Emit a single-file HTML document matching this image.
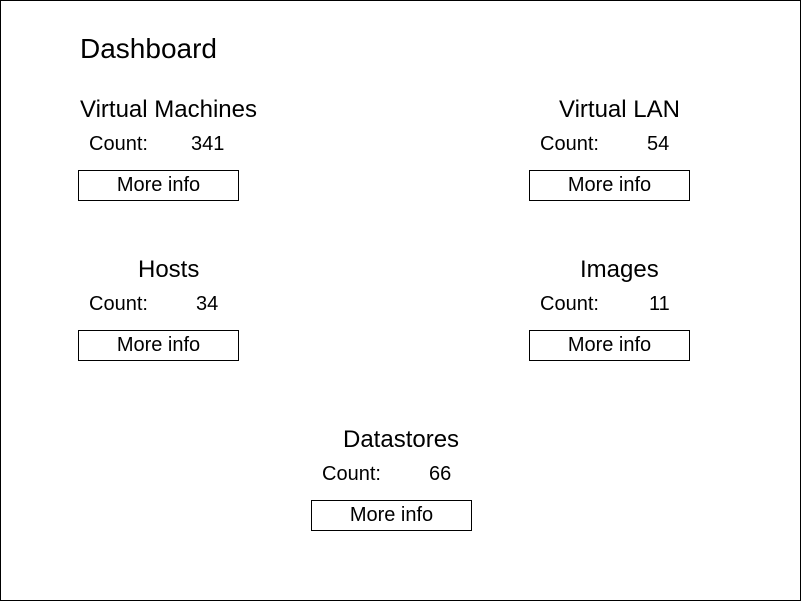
<!DOCTYPE html>
<html><head><style>
html,body{margin:0;padding:0}
body{width:801px;height:601px;position:relative;background:#fff;font-family:"Liberation Sans",Arial,sans-serif;color:#000;overflow:hidden}
.frame{position:absolute;left:0;top:0;width:799px;height:599px;border:1px solid #000}
.t{position:absolute;white-space:nowrap;line-height:1}
.h1{font-size:28px}
.h2{font-size:24px}
.c{font-size:20px}
.b{position:absolute;width:159px;height:29px;border:1px solid #000;font-size:20px;line-height:28px;text-align:center}
</style></head><body>
<div class="frame"></div>
<div class="t h1" style="left:80px;top:35px">Dashboard</div>

<div class="t h2" style="left:80px;top:98px">Virtual Machines</div>
<div class="t c" style="left:89px;top:134px">Count:</div>
<div class="t c" style="left:191px;top:134px">341</div>
<div class="b" style="left:78px;top:170px">More info</div>

<div class="t h2" style="left:559px;top:98px">Virtual LAN</div>
<div class="t c" style="left:540px;top:134px">Count:</div>
<div class="t c" style="left:647px;top:134px">54</div>
<div class="b" style="left:529px;top:170px">More info</div>

<div class="t h2" style="left:138px;top:258px">Hosts</div>
<div class="t c" style="left:89px;top:294px">Count:</div>
<div class="t c" style="left:196px;top:294px">34</div>
<div class="b" style="left:78px;top:330px">More info</div>

<div class="t h2" style="left:580px;top:258px">Images</div>
<div class="t c" style="left:540px;top:294px">Count:</div>
<div class="t c" style="left:649px;top:294px">11</div>
<div class="b" style="left:529px;top:330px">More info</div>

<div class="t h2" style="left:343px;top:428px">Datastores</div>
<div class="t c" style="left:322px;top:464px">Count:</div>
<div class="t c" style="left:429px;top:464px">66</div>
<div class="b" style="left:311px;top:500px">More info</div>
</body></html>
